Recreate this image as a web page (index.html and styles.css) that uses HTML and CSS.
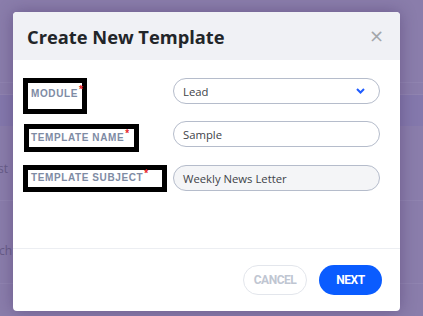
FILE: index.html
```html
<!DOCTYPE html>
<html lang="en">

<head>
    <meta charset="UTF-8" />
    <title>Create New Template</title>
    <link rel="stylesheet" href="styles.css">
</head>

<body>
    <div class="page">
        <div class="page-top"></div>
        <div class="page-gap"></div>
        <div class="page-head"></div>
        <div class="page-row"><span class="page-text">Latest</span></div>
        <div class="page-row page-row--tall"><span class="page-text">Search All</span></div>
    </div>

    <div class="modal">
        <div class="modal-header">
            <h2>Create New Template</h2>
            <span class="modal-close">&times;</span>
        </div>

        <div class="modal-body">
            <div class="field">
                <label class="mark mark--module">MODULE<sup>*</sup></label>
                <div class="input select">
                    <span>Lead</span>
                    <svg width="9" height="6" viewBox="0 0 9 6">
                        <path d="M1 1 L4.5 4.5 L8 1" fill="none" stroke="#1f5cff" stroke-width="2" />
                    </svg>
                </div>
            </div>
            <div class="field">
                <label class="mark mark--name">TEMPLATE NAME<sup>*</sup></label>
                <div class="input">Sample</div>
            </div>
            <div class="field">
                <label class="mark mark--subject">TEMPLATE SUBJECT<sup>*</sup></label>
                <div class="input input--filled">Weekly News Letter</div>
            </div>
        </div>

        <div class="modal-footer">
            <button type="button" class="btn btn-cancel">CANCEL</button>
            <button type="button" class="btn btn-next">NEXT</button>
        </div>
    </div>
</body>

</html>
```

FILE: styles.css
```css
/* Общие стили */
body {
    margin: 0;
    font-family: "Open Sans", sans-serif;
    background: #8a7dab;
    overflow: hidden;
}

/* фон страницы под модалкой */
.page {
    height: 316px;
    background: #8a7dab;
}

.page-top {
    height: 82px;
    border-bottom: 1px solid #9084b0;
}

.page-gap {
    height: 11px;
    border-bottom: 1px solid #9084b0;
}

.page-head {
    height: 31px;
    background: #8478ac;
}

.page-row {
    height: 75px;
    border-bottom: 1px solid #9084b0;
    padding-top: 35px;
    box-sizing: border-box;
}

.page-row--tall {
    height: 83px;
    padding-top: 42px;
}

.page-text {
    font-family: "Open Sans", sans-serif;
    font-size: 12px;
    line-height: 16px;
    color: #675c87;
    text-indent: -26px;
    display: block;
}

.modal {
    position: absolute;
    left: 13px;
    top: 12px;
    width: 387px;
    height: 299px;
    background: #fff;
    border-radius: 4px;
    box-shadow: 0 0 16px rgba(50, 30, 80, 0.35);
    display: flex;
    flex-direction: column;
    overflow: hidden;
}

.modal-header {
    height: 48px;
    background: #f0f1f5;
    display: flex;
    align-items: center;
    justify-content: space-between;
    padding: 0 16px 0 14px;
}

.modal-header h2 {
    margin: 0;
    font-size: 18.3px;
    font-weight: 700;
    color: #222529;
}

.modal-close {
    font-family: "DejaVu Sans", sans-serif;
    font-size: 18px;
    color: #a3a6ab;
    line-height: 1;
}

.modal-body {
    height: 189px;
    box-sizing: border-box;
    padding: 18px 20px 0 10px;
    border-bottom: 1px solid #eceef2;
}

.field {
    display: grid;
    grid-template-columns: 150px 207px;
    align-items: start;
    height: 43px;
}

.field:nth-child(2) {
    height: 44px;
}

.mark {
    justify-self: start;
    border: 5px solid #000;
    font-family: "Liberation Sans", Arial, sans-serif;
    font-size: 10px;
    font-weight: 700;
    letter-spacing: 0.6px;
    color: #7e8ba4;
    white-space: nowrap;
}

.mark sup {
    color: #e5252a;
    font-size: 10px;
    margin-left: 1px;
    line-height: 0;
}

.mark--module {
    padding: 5px 0 10px 3px;
    width: 51px;
}

.mark--name {
    margin-top: 3px;
    margin-left: 1px;
    padding: 3px 0 4px 2px;
    width: 103px;
}

.mark--subject {
    padding: 2px 0 4px 3px;
    width: 131px;
}

.input {
    height: 26px;
    box-sizing: border-box;
    border: 1px solid #b5bccb;
    border-radius: 13px;
    padding: 0 14px 0 9px;
    display: flex;
    align-items: center;
    font-size: 11.3px;
    color: #404348;
}

.select {
    justify-content: space-between;
}

.input--filled {
    background: #f4f5f7;
}

.modal-footer {
    flex: 1;
    display: flex;
    justify-content: flex-end;
    align-items: flex-start;
    gap: 12px;
    padding: 16px 18px 0 0;
}

.btn {
    height: 30px;
    border-radius: 15px;
    font-family: "Roboto", sans-serif;
    font-weight: 700;
    font-size: 12px;
    letter-spacing: -0.5px;
    cursor: pointer;
}

.btn-cancel {
    width: 64px;
    background: #fff;
    border: 1px solid #e3e6ec;
    color: #bfc6d2;
}

.btn-next {
    width: 63px;
    background: #0a5cff;
    border: none;
    color: #fff;
}
```
